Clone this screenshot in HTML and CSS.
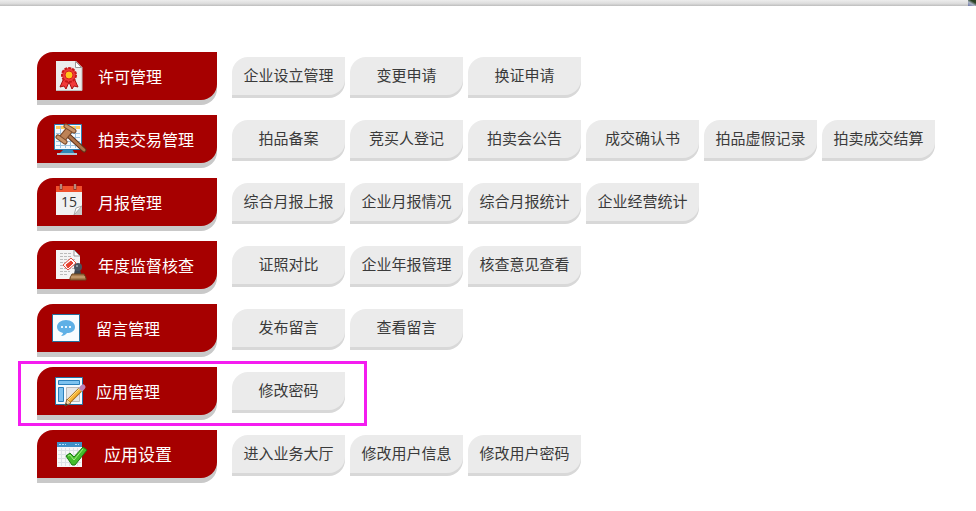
FILE: index.html
```html
<!DOCTYPE html>
<html lang="zh-CN">
<head>
    <meta charset="UTF-8">
    <title>业务管理</title>
    <link rel="stylesheet" href="styles.css">
</head>
<body>
<header class="topbar"><span class="corner"></span></header>
<nav class="menu">
    <div class="row">
        <button class="cat" type="button">
            <svg class="icon" viewBox="0 0 36 36" aria-hidden="true">
                <path d="M4 3h20l6 6v24H4z" fill="#ececec"/>
                <path d="M4 32.500h26V9" stroke="#bdbdbd"/>
                <path d="M23.500 3.500v6h6z" fill="#fff" stroke="#999"/>
                <path d="M12 20l-4 9 4-1 2 3 3-7 3 7 2-3 4 1-4-9z" fill="#f23a3a" stroke="#a80f0f"/>
                <circle cx="17" cy="17" r="7" fill="#f03a3a" stroke="#c81818" stroke-width="2" stroke-dasharray="3 1"/>
                <circle cx="17" cy="17" r="4" fill="#ffc61a" stroke="#d62020"/>
            </svg>
            <span>许可管理</span>
        </button>
        <a class="item" href="#">企业设立管理</a>
        <a class="item" href="#">变更申请</a>
        <a class="item" href="#">换证申请</a>
    </div>
    <div class="row">
        <button class="cat" type="button">
            <svg class="icon" viewBox="0 0 36 36" aria-hidden="true">
                <path d="M12 28h8l3 5H7z" fill="#2f86b5"/>
                <path d="M5 33h20" stroke="#a8c8d8" stroke-width="2"/>
                <path d="M2.500 3.500h27v25h-27z" fill="#f5faff" stroke="#2b7eb3"/>
                <path d="M4 5h24v3H4z" fill="#ffcb5c"/>
                <path d="M4 12.500h24M4 16.500h24M4 20.500h24M4 24.500h24M8.500 5v22M13.500 5v22M18.500 5v22M23.500 5v22" stroke="#9fc4e2"/>
                <path d="M17 15l15 14" stroke="#5d3119" stroke-width="5" stroke-linecap="round"/>
                <path d="M17 15l15 14" stroke="#b0744a" stroke-width="3" stroke-linecap="round"/>
                <path d="M10 18l8-10" stroke="#7a4a2b" stroke-width="8"/>
                <path d="M10 18l8-10" stroke="#bd8256" stroke-width="6"/>
                <path d="M6 16l7 5M14 5l8 5" stroke="#7a4a2b" stroke-width="5" stroke-linecap="round"/>
                <path d="M6 16l7 5M14 5l8 5" stroke="#c99468" stroke-width="3" stroke-linecap="round"/>
            </svg>
            <span>拍卖交易管理</span>
        </button>
        <a class="item" href="#">拍品备案</a>
        <a class="item" href="#">竞买人登记</a>
        <a class="item" href="#">拍卖会公告</a>
        <a class="item" href="#">成交确认书</a>
        <a class="item" href="#">拍品虚假记录</a>
        <a class="item" href="#">拍卖成交结算</a>
    </div>
    <div class="row">
        <button class="cat" type="button">
            <svg class="icon" viewBox="0 0 36 36" aria-hidden="true">
                <path d="M4 3h26v28H4z" fill="#f1f1f1"/>
                <path d="M4 2h26v6H4z" fill="#f0512d"/>
                <path d="M9 0v6M23 0v6" stroke="#8d3323" stroke-width="3"/>
                <path d="M9 0v5M23 0v5" stroke="#ddd"/>
                <text class="date" x="9" y="23">15</text>
                <path d="M30 22l-8 9h8z" fill="#c9c9c9"/>
                <path d="M30 22l-6 2-2 7z" fill="#fff" stroke="#aaa"/>
            </svg>
            <span>月报管理</span>
        </button>
        <a class="item" href="#">综合月报上报</a>
        <a class="item" href="#">企业月报情况</a>
        <a class="item" href="#">综合月报统计</a>
        <a class="item" href="#">企业经营统计</a>
    </div>
    <div class="row">
        <button class="cat" type="button">
            <svg class="icon" viewBox="0 0 36 36" aria-hidden="true">
                <path d="M4 3h18l6 6v23H4z" fill="#f4f4f4"/>
                <path d="M22 3v6h6z" fill="#fff" stroke="#999"/>
                <path d="M8 6.500h12M8 9.500h12M8 12.500h16M8 15.500h16M8 18.500h16M8 21.500h16M8 24.500h10M8 27.500h8" stroke="#bbb" stroke-dasharray="3 1"/>
                <path d="M11 18l8-7 5 5-8 7z" fill="#fff" stroke="#e44a3c"/>
                <path d="M14 18l5-4 2 2-5 5z" fill="#e6402f" stroke="#e6402f"/>
                <path d="M23 22h5l1 5h-7z" fill="#3d444d"/>
                <circle cx="26" cy="20" r="4" fill="#4b535d"/>
                <circle cx="25" cy="19" r="1" fill="#a9b2ba"/>
                <path d="M20 27h12l2 4v2H18v-2z" fill="#a87d4f" stroke="#69451f"/>
                <path d="M19 30h14" stroke="#d8b184"/>
            </svg>
            <span>年度监督核查</span>
        </button>
        <a class="item" href="#">证照对比</a>
        <a class="item" href="#">企业年报管理</a>
        <a class="item" href="#">核查意见查看</a>
    </div>
    <div class="row">
        <button class="cat cat-near" type="button">
            <svg class="icon" viewBox="0 0 36 36" aria-hidden="true">
                <path d="M.500 4.500h27v27H.500z" fill="#f8fcff" stroke="#23719f"/>
                <path d="M14 10c5 0 9 3 9 7s-4 6-8 6c-1 1-3 3-6 3 1-1 2-2 2-3-4-1-6-3-6-6 0-4 4-7 9-7z" fill="#5fb0e6"/>
                <path d="M9 16h2v2H9zM13 16h2v2h-2zM17 16h2v2h-2z" fill="#e8f6ff"/>
            </svg>
            <span>留言管理</span>
        </button>
        <a class="item" href="#">发布留言</a>
        <a class="item" href="#">查看留言</a>
    </div>
    <div class="row current">
        <button class="cat cat-near" type="button">
            <svg class="icon" viewBox="0 0 36 36" aria-hidden="true">
                <path d="M3.500 4.500h27v27h-27z" fill="#f4faff" stroke="#1f74a8"/>
                <path d="M6.500 7.500h21v4h-21zM6.500 14.500h5v14h-5z" fill="#7ec3f0" stroke="#2b80bc"/>
                <path d="M14.500 14.500h13v14h-13z" fill="#e6e6e6" stroke="#bbb"/>
                <path d="M13 33l2-7 4 4z" fill="#f3d3a0" stroke="#8b6234"/>
                <path d="M13 33l1-3 2 2z" fill="#333"/>
                <path d="M17 28l12-12" stroke="#a86b12" stroke-width="5"/>
                <path d="M17 28l12-12" stroke="#f9b637" stroke-width="3"/>
                <path d="M16 27l12-12" stroke="#ffdf83"/>
                <path d="M28 17l2-2" stroke="#bbb" stroke-width="5"/>
                <path d="M30 15l1-1" stroke="#bd80b8" stroke-width="5" stroke-linecap="round"/>
            </svg>
            <span>应用管理</span>
        </button>
        <a class="item" href="#">修改密码</a>
    </div>
    <div class="row">
        <button class="cat cat-far" type="button">
            <svg class="icon" viewBox="0 0 36 36" aria-hidden="true">
                <path d="M5 6h25v25H5z" fill="#f7f7f7"/>
                <path d="M5 6h25v5H5z" fill="#3f8fc6"/>
                <path d="M7 8.500h7M23 8.500h4" stroke="#b9defa" stroke-dasharray="2 1"/>
                <path d="M6 14.500h23M6 18.500h23M6 22.500h23M6 26.500h23M9.500 12v18M13.500 12v18M17.500 12v18M21.500 12v18M25.500 12v18" stroke="#dde1e5"/>
                <path d="M14 20l4-3 4 4 9-10 4 3-12 15h-3z" fill="#45bd2c" stroke="#1c7a12"/>
                <path d="M16 20l2-1 4 5 9-11" fill="none" stroke="#a7ee86"/>
            </svg>
            <span>应用设置</span>
        </button>
        <a class="item" href="#">进入业务大厅</a>
        <a class="item" href="#">修改用户信息</a>
        <a class="item" href="#">修改用户密码</a>
    </div>
</nav>
</body>
</html>
```
FILE: styles.css
```css
body { margin: 0; background: #fff; font-family: "Noto Sans CJK SC", sans-serif; }
.topbar { display: flex; justify-content: flex-end; height: 6px; background: linear-gradient(#ededed 0%, #dcdcdc 60%, #bdbdbd 100%); }
.corner { width: 8px; background: linear-gradient(30deg, #6d74a8 0%, #a9b3c4 40%, #2c4426 70%); }
.menu { display: flex; flex-direction: column; align-items: flex-start; gap: 10px; padding: 46px 36px 24px 37px; }
.row { display: flex; align-items: center; gap: 5px; padding-bottom: 5px; }
.cat { display: flex; align-items: center; gap: 10px; width: 180px; height: 48px; margin: 0 10px 0 0; padding: 0 0 0 15px; border: none; border-radius: 16px 0 16px 0; background: #a60000; box-shadow: 0 5px 0 #c9c9c9; color: #fff; font-family: inherit; font-size: 16px; line-height: 24px; cursor: pointer; }
.cat:hover { background: #b80000; }
.cat-near { gap: 8px; }
.cat-far { gap: 16px; font-size: 17px; }
.icon { width: 36px; height: 36px; flex: none; fill: none; }
.date { font-family: "Open Sans", sans-serif; font-size: 14px; fill: #333; }
.item { width: 113px; height: 38px; border-radius: 16px 0 16px 0; background: #ebebeb; box-shadow: 0 3px 0 #d8d8d8; color: #3a3a3a; font-size: 15px; line-height: 36px; text-align: center; text-decoration: none; white-space: nowrap; }
.item:hover { background: #f3f3f3; }
.current { position: relative; }
.current::after { content: ""; position: absolute; inset: -6px -22px -6px -19px; border: 3px solid #f41cf0; pointer-events: none; }
```
